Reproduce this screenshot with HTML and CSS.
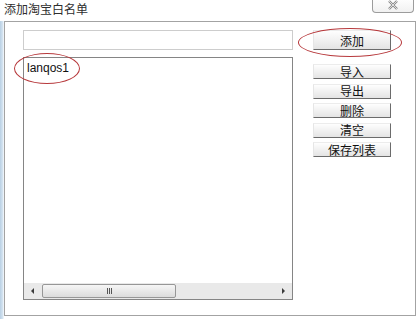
FILE: index.html
```html
<!DOCTYPE html>
<html lang="zh-CN">
<head>
    <meta charset="UTF-8">
    <title>添加淘宝白名单</title>
    <link rel="stylesheet" href="styles.css">
</head>
<body>
    <div class="dialog">
        <div class="titlebar">
            <span class="title">添加淘宝白名单</span>
            <span class="close">
                <svg width="14" height="10" viewBox="0 0 14 10">
                    <path d="M3 1 L11 9 M11 1 L3 9" stroke="#8a8a8a" stroke-width="2.4" fill="none"/>
                    <path d="M3 1 L11 9 M11 1 L3 9" stroke="#f2f2f2" stroke-width="0.8" fill="none"/>
                </svg>
            </span>
        </div>
        <div class="client">
            <div class="frame">
                <div class="left-col">
                    <input type="text" class="entry">
                    <div class="list">
                        <div class="list-items">
                            <div class="item">lanqos1</div>
                        </div>
                        <div class="hscroll">
                            <span class="arrow"><i class="tri tri-left"></i></span>
                            <div class="track">
                                <div class="thumb"><i class="grip"></i><i class="grip"></i><i class="grip"></i></div>
                            </div>
                            <span class="arrow"><i class="tri tri-right"></i></span>
                        </div>
                    </div>
                </div>
                <div class="right-col">
                    <button class="btn btn-add">添加</button>
                    <div class="actions">
                        <button class="btn">导入</button>
                        <button class="btn">导出</button>
                        <button class="btn">删除</button>
                        <button class="btn">清空</button>
                        <button class="btn">保存列表</button>
                    </div>
                </div>
                <span class="mark mark-add"></span>
                <span class="mark mark-item"></span>
            </div>
        </div>
    </div>
</body>
</html>
```

FILE: styles.css
```css
body {
    margin: 0;
    width: 420px;
    height: 319px;
    overflow: hidden;
    background: #ffffff;
    font-family: "Noto Sans CJK SC", "Liberation Sans", sans-serif;
}

.dialog {
    display: flex;
    flex-direction: column;
    height: 319px;
}

.titlebar {
    display: flex;
    justify-content: space-between;
    align-items: flex-start;
    height: 21px;
}

.title {
    padding: 1px 0 0 4px;
    font-size: 12px;
    line-height: 15px;
    color: #2e2e2e;
}

.close {
    display: flex;
    justify-content: center;
    align-items: center;
    width: 40px;
    height: 14px;
    margin: -2px 6px 0 0;
    border: 1px solid #9c9c9c;
    border-top: none;
    border-radius: 0 0 4px 4px;
    background: linear-gradient(#ffffff, #f1f1f1);
}

.client {
    flex: 1;
    padding: 0 4px 3px 4px;
    background: linear-gradient(to right, #b9d0e4 0, #d8e6f2 3px, #ffffff 4px);
}

.frame {
    position: relative;
    display: flex;
    gap: 20px;
    height: 295px;
    box-sizing: border-box;
    padding: 8px 0 0 18px;
    border: 1px solid #a3a3a3;
    background: #ffffff;
}

.left-col {
    display: flex;
    flex-direction: column;
    width: 270px;
}

.entry {
    height: 20px;
    margin: 0 0 7px 0;
    padding: 0;
    box-sizing: border-box;
    border: 1px solid #cdcdcd;
    outline: none;
}

.list {
    display: flex;
    flex-direction: column;
    height: 243px;
    box-sizing: border-box;
    border: 1px solid #858585;
}

.list-items {
    flex: 1;
    padding: 3px 0 0 3px;
}

.item {
    font-family: "Liberation Sans", sans-serif;
    font-size: 12px;
    line-height: 14px;
    color: #111111;
}

.hscroll {
    display: flex;
    height: 16px;
    background: #e9e9e9;
}

.arrow {
    display: flex;
    justify-content: center;
    align-items: center;
    width: 17px;
}

.tri {
    width: 0;
    height: 0;
    border-top: 3px solid transparent;
    border-bottom: 3px solid transparent;
}

.tri-left {
    border-right: 3px solid #3a3a3a;
}

.tri-right {
    border-left: 3px solid #3a3a3a;
}

.track {
    flex: 1;
    display: flex;
    align-items: center;
}

.thumb {
    display: flex;
    justify-content: center;
    align-items: center;
    gap: 1px;
    width: 134px;
    height: 14px;
    margin-left: 1px;
    box-sizing: border-box;
    border: 1px solid #979797;
    border-radius: 2px;
    background: linear-gradient(#f6f6f6, #dcdcdc);
}

.grip {
    width: 1px;
    height: 6px;
    background: #555555;
}

.right-col {
    display: flex;
    flex-direction: column;
    width: 78px;
}

.actions {
    display: flex;
    flex-direction: column;
    gap: 4.5px;
    margin-top: 14px;
}

.btn {
    height: 15px;
    padding: 0;
    box-sizing: border-box;
    border: 1px solid;
    border-color: #ececec #6b6b6b #6b6b6b #e6e6e6;
    background: linear-gradient(#fefefe, #e4e4e4);
    font-family: "Noto Sans CJK SC", sans-serif;
    font-size: 12px;
    line-height: 12px;
    color: #111111;
}

.btn-add {
    height: 20px;
    line-height: 17px;
}

.mark {
    position: absolute;
    box-sizing: border-box;
    border: 1px solid #b7393c;
    border-radius: 50%;
}

.mark-add {
    left: 293px;
    top: 6px;
    width: 104px;
    height: 29px;
}

.mark-item {
    left: 9px;
    top: 31px;
    width: 66px;
    height: 31px;
}
```
